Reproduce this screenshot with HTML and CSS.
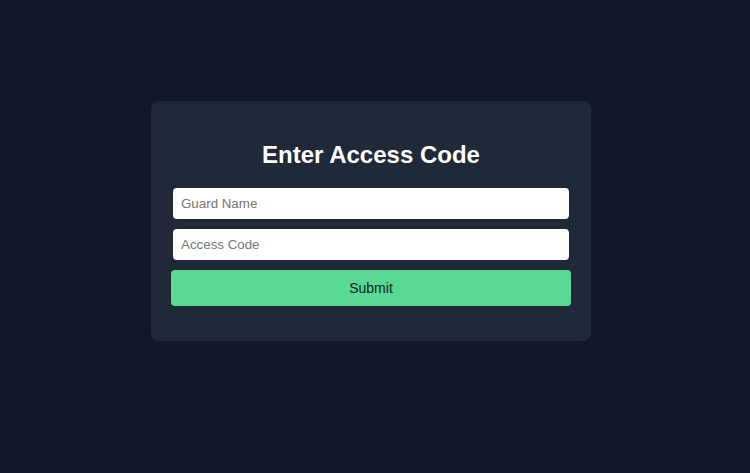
FILE: index.html
```html
<!DOCTYPE html>
<html lang="en">
<head>
<meta charset="utf-8">
<title>Enter Access Code</title>
<link rel="stylesheet" href="styles.css">
</head>
<body>
<main class="page">
  <form class="card">
    <h2 class="title">Enter Access Code</h2>
    <input class="field" type="text" placeholder="Guard Name">
    <input class="field" type="text" placeholder="Access Code">
    <button class="submit" type="button">Submit</button>
  </form>
</main>
</body>
</html>
```

FILE: styles.css
```css
html, body {
  margin: 0;
  padding: 0;
  background: #111827;
  font-family: "Liberation Sans", Arial, sans-serif;
}
.page {
  width: 742px;
  height: 473px;
  display: flex;
  align-items: flex-start;
  justify-content: center;
  padding-top: 101px;
  box-sizing: border-box;
}
.card {
  width: 440px;
  height: 240px;
  box-sizing: border-box;
  background: #1f2937;
  border-radius: 8px;
  padding: 40px 20px 35px;
  display: flex;
  flex-direction: column;
  align-items: center;
}
.title {
  margin: 0 0 19px;
  color: #ffffff;
  font-size: 24px;
  font-weight: bold;
  line-height: 28px;
}
.field {
  width: 396px;
  height: 31px;
  box-sizing: border-box;
  border: none;
  border-radius: 4px;
  background: #ffffff;
  padding: 0 8px;
  margin: 0 0 10px;
  font-family: "Liberation Sans", Arial, sans-serif;
  font-size: 13.33px;
  color: #111827;
}
.field::placeholder {
  color: #757575;
}
.submit {
  width: 400px;
  height: 36px;
  border: none;
  border-radius: 4px;
  background: #5ad994;
  color: #111827;
  font-family: "Liberation Sans", Arial, sans-serif;
  font-size: 14px;
  padding: 0;
  margin: 0;
}
```
